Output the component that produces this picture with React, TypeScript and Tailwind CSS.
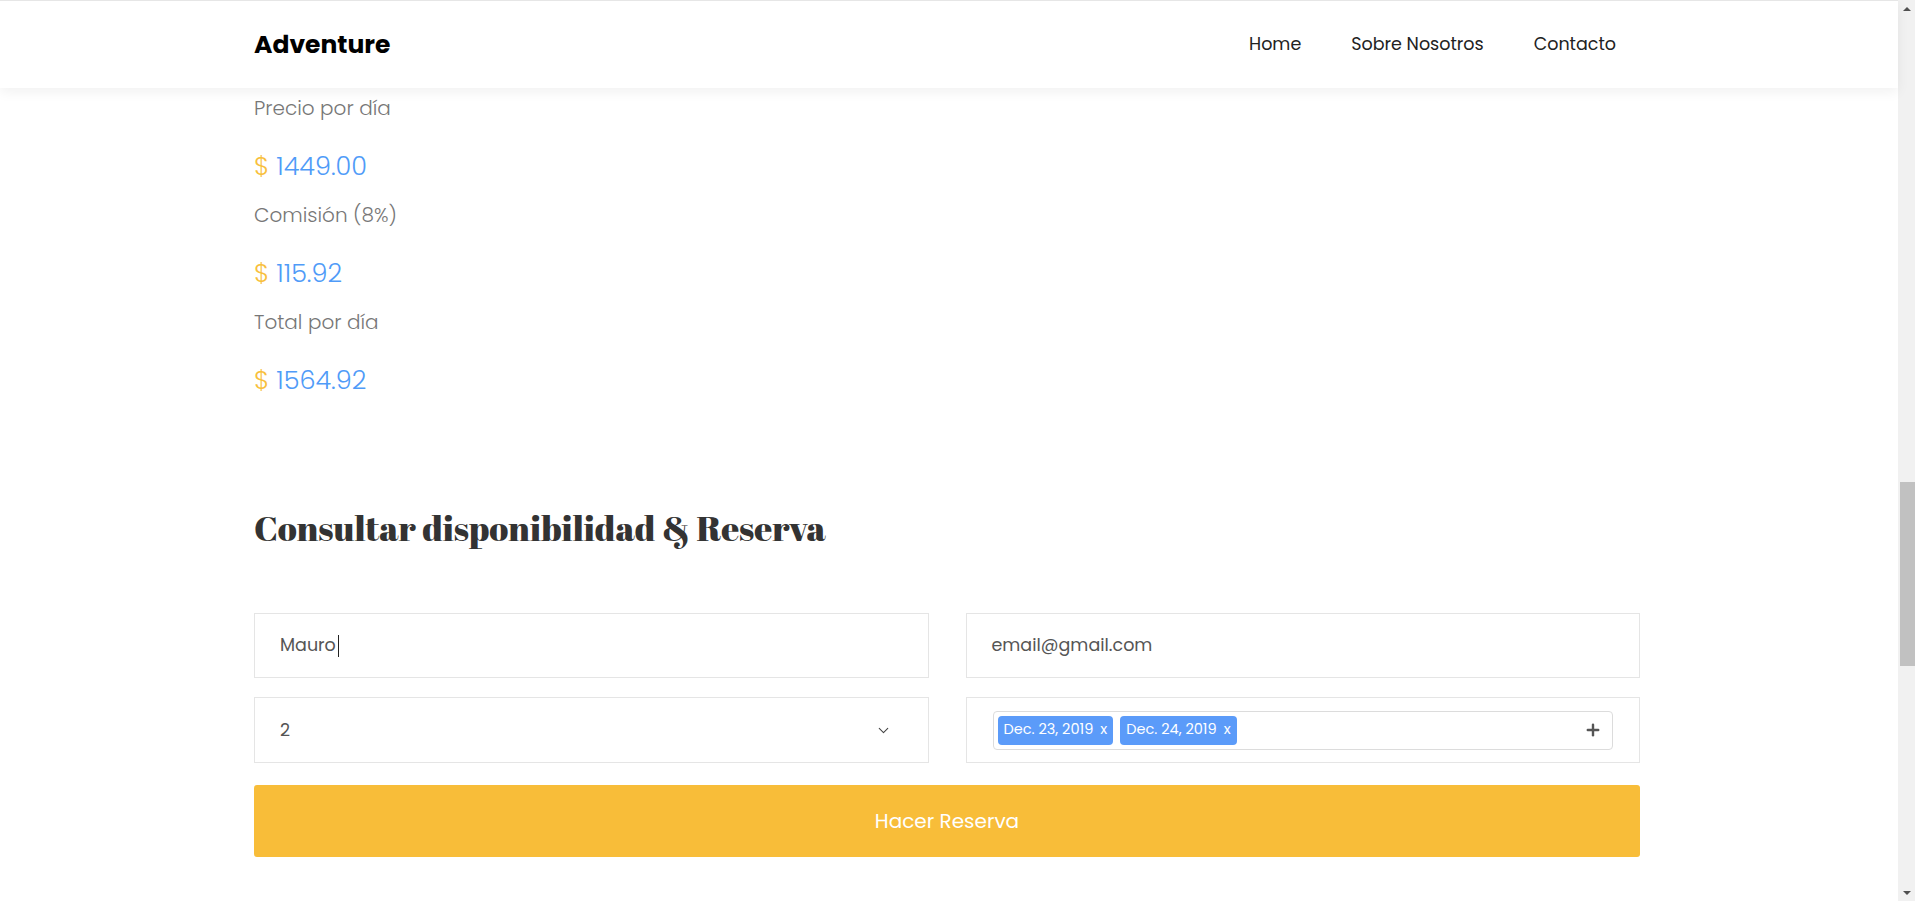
import { ChevronDown, Plus } from 'lucide-react';

const sans = "font-['Poppins','Open_Sans',sans-serif]";

const precios = [
  { label: 'Precio por día', valor: '1449.00' },
  { label: 'Comisión (8%)', valor: '115.92' },
  { label: 'Total por día', valor: '1564.92' },
];

const fechas = ['Dec. 23, 2019', 'Dec. 24, 2019'];

function Scrollbar() {
  return (
    <div className="w-[17px] h-full bg-[#f1f1f1] flex flex-col items-center">
      <div className="h-[17px] flex items-center justify-center">
        <div className="w-0 h-0 border-x-[4px] border-x-transparent border-b-[4px] border-b-[#505050]" />
      </div>
      <div className="flex-1 w-full flex flex-col pl-[2px]">
        <div className="h-[465px]" />
        <div className="h-[184px] bg-[#c1c1c1]" />
      </div>
      <div className="h-[17px] flex items-center justify-center">
        <div className="w-0 h-0 border-x-[4px] border-x-transparent border-t-[4px] border-t-[#505050]" />
      </div>
    </div>
  );
}

export default function App() {
  return (
    <div className={`flex h-[901px] overflow-hidden bg-white ${sans}`}>
      <div className="flex-1 flex flex-col min-w-0">
        {/* cabecera */}
        <header className="h-[88px] shrink-0 border-t border-[#e6e6e6] bg-white shadow-[0_4px_12px_rgba(0,0,0,0.06)] relative z-10">
          <div className="w-[1386px] ml-[254px] h-full flex items-center justify-between">
            <span className="text-[25px] font-bold text-black">Adventure</span>
            <nav className="flex items-center gap-[50px] mr-[24px] text-[17.5px] text-[#222]">
              <a>Home</a>
              <a>Sobre Nosotros</a>
              <a>Contacto</a>
            </nav>
          </div>
        </header>

        <main className="w-[1386px] ml-[254px]">
          <div className="mt-[6px] flex flex-col gap-[17px]">
            {precios.map((p) => (
              <div key={p.label} className="flex flex-col gap-[26px]">
                <span className="text-[20px] leading-[28px] font-light text-[#777]">{p.label}</span>
                <span className="text-[25.5px] leading-[36px] font-light">
                  <span className="text-[#f8c03c]">$</span>
                  <span className="text-[#4f9bf8]"> {p.valor}</span>
                </span>
              </div>
            ))}
          </div>

          <h2 className="mt-[108px] text-[35px] leading-[44px] font-normal text-[#333] font-['Abril_Fatface','Playfair_Display','Liberation_Serif',serif]">
            Consultar disponibilidad &amp; Reserva
          </h2>

          <form className="mt-[63px] flex flex-col gap-[22px]" onSubmit={(e) => e.preventDefault()}>
            <div className="grid grid-cols-2 gap-x-[37px] gap-y-[19px]">
              <div className="h-[65px] border border-[#e5e5e5] px-[25px] flex items-center text-[17.5px] text-[#555]">
                Mauro
                <span className="ml-[2px] w-[1px] h-[22px] bg-[#222]" />
              </div>
              <div className="h-[65px] border border-[#e5e5e5] px-[25px] flex items-center text-[17.5px] text-[#555]">
                email@gmail.com
              </div>
              <div className="h-[66px] border border-[#e5e5e5] pl-[25px] pr-[36px] flex items-center justify-between text-[17.5px] text-[#555]">
                <span>2</span>
                <ChevronDown size={17} strokeWidth={1.5} className="text-[#444]" />
              </div>
              <div className="h-[66px] border border-[#e5e5e5] px-[26px] flex items-center">
                <div className="flex-1 h-[39px] border border-[#dcdcdc] rounded-[4px] flex items-center pl-[4px] pr-[10px] gap-[7px]">
                  {fechas.map((f) => (
                    <span
                      key={f}
                      className="h-[29px] px-[6px] rounded-[4px] bg-[#5b9bf9] text-white text-[14.5px] flex items-center gap-[7px]"
                    >
                      {f}
                      <span>x</span>
                    </span>
                  ))}
                  <span className="flex-1" />
                  <Plus size={18} strokeWidth={3.2} className="text-[#555]" />
                </div>
              </div>
            </div>
            <button className="h-[72px] w-full rounded-[3px] bg-[#f8bd39] text-white text-[20px]">
              Hacer Reserva
            </button>
          </form>
        </main>
      </div>
      <Scrollbar />
    </div>
  );
}
